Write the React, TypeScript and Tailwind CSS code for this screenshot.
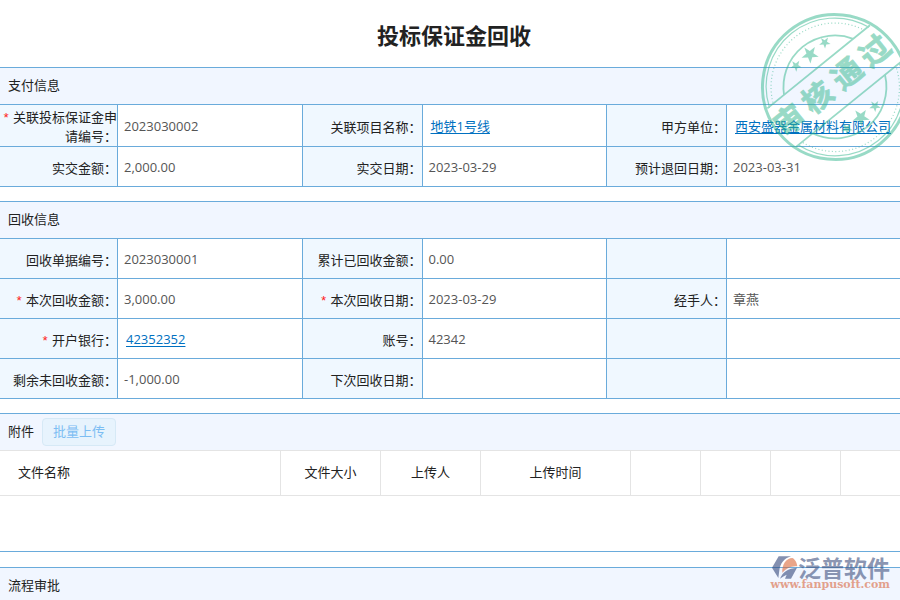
import type { ReactNode } from "react";

type Field = {
    label?: string;
    value?: string;
    required?: boolean;
    link?: boolean;
};

const paymentRows: Field[][] = [
    [
        { label: "关联投标保证金申请编号", value: "2023030002", required: true },
        { label: "关联项目名称", value: "地铁1号线", link: true },
        { label: "甲方单位", value: "西安盛器金属材料有限公司", link: true },
    ],
    [
        { label: "实交金额", value: "2,000.00" },
        { label: "实交日期", value: "2023-03-29" },
        { label: "预计退回日期", value: "2023-03-31" },
    ],
];

const recoveryRows: Field[][] = [
    [
        { label: "回收单据编号", value: "2023030001" },
        { label: "累计已回收金额", value: "0.00" },
        {},
    ],
    [
        { label: "本次回收金额", value: "3,000.00", required: true },
        { label: "本次回收日期", value: "2023-03-29", required: true },
        { label: "经手人", value: "章燕" },
    ],
    [
        { label: "开户银行", value: "42352352", required: true, link: true },
        { label: "账号", value: "42342" },
        {},
    ],
    [
        { label: "剩余未回收金额", value: "-1,000.00" },
        { label: "下次回收日期" },
        {},
    ],
];

function SectionTitle({ children }: { children: ReactNode }) {
    return (
        <div className="flex h-[38px] items-center gap-2 border-y border-[#6aabdb] bg-[#f1f6ff] px-2">
            {children}
        </div>
    );
}

function FieldCells({ field }: { field: Field }) {
    const { label, value, required, link } = field;

    return (
        <>
            <th
                scope="row"
                className="border-r border-b border-[#6aabdb] bg-[#f0f8ff] pt-[3px] text-right font-normal text-[#222]"
            >
                {required && (
                    <span className="mr-[3px] align-middle font-['Liberation_Mono',monospace] text-[13px] leading-none text-[#ff2020]">
                        *
                    </span>
                )}
                {label && `${label}：`}
            </th>
            <td className="border-r border-b border-[#6aabdb] pt-0.5 text-[#555] last:border-r-0">
                {link ? (
                    <a href="#" className="pl-2 whitespace-nowrap text-[#0070c0]">
                        <span className="underline underline-offset-2">{value}</span>
                    </a>
                ) : (
                    <span className="pl-1.5">{value}</span>
                )}
            </td>
        </>
    );
}

function FieldTable({ rows }: { rows: Field[][] }) {
    return (
        <table className="w-full table-fixed border-separate border-spacing-0 leading-[19px]">
            <colgroup>
                <col className="w-[118px]" />
                <col className="w-[20.5%]" />
                <col className="w-[120px]" />
                <col className="w-[20.5%]" />
                <col className="w-[120px]" />
                <col />
            </colgroup>
            <tbody>
                {rows.map((row, i) => (
                    <tr key={i} className="h-10">
                        {row.map((field, j) => (
                            <FieldCells key={j} field={field} />
                        ))}
                    </tr>
                ))}
            </tbody>
        </table>
    );
}

function FileTable() {
    const head = "border-r border-b border-[#e4e4e4] font-normal";

    return (
        <table className="w-full table-fixed border-separate border-spacing-0 text-[#222]">
            <colgroup>
                <col />
                <col className="w-[100px]" />
                <col className="w-[100px]" />
                <col className="w-[150px]" />
                <col className="w-[70px]" />
                <col className="w-[70px]" />
                <col className="w-[70px]" />
                <col className="w-[59px]" />
            </colgroup>
            <thead>
                <tr className="h-[45px]">
                    <th className={`${head} pl-[18px] text-left`}>文件名称</th>
                    <th className={head}>文件大小</th>
                    <th className={head}>上传人</th>
                    <th className={head}>上传时间</th>
                    <td className={head} />
                    <td className={head} />
                    <td className={head} />
                    <td className="border-b border-[#e4e4e4]" />
                </tr>
            </thead>
        </table>
    );
}

// 五角星，外接圆半径为 1
const STAR = "M0-1 .235-.324 .951-.309 .38.124 .588.809 0 .4-.588.809-.38.124-.951-.309-.235-.324Z";

const stars = [
    { x: -17, y: -41, r: 6 },
    { x: 1, y: -41, r: 9 },
    { x: 20, y: -41, r: 6 },
    { x: -17, y: 40, r: 6 },
    { x: 1, y: 40, r: 9 },
    { x: 19, y: 40, r: 6 },
];

const stampChars = [
    { char: "审", x: -56 },
    { char: "核", x: -20 },
    { char: "通", x: 18 },
    { char: "过", x: 54 },
];

// 审核通过印章
function Stamp() {
    return (
        <svg
            viewBox="-75 -75 150 150"
            className="pointer-events-none absolute top-3 -right-2.5 size-[150px] opacity-50"
            role="img"
            aria-label="审核通过"
        >
            <g transform="rotate(-39)" fill="none" stroke="#34b78e">
                <circle r="72.5" strokeWidth="3" />
                <path d="M-64-25A68.500 68.500 0 0 1 64-25M-65 22A68.500 68.500 0 0 0 65 22" strokeWidth="1.2" />
                <path d="M-58-27A64 64 0 0 1 58-27M-60 23A64 64 0 0 0 60 23" strokeWidth="1.2" strokeDasharray="1 2.4" />
                <path d="M-44.500-26A51.500 51.500 0 0 1 44.500-26M-46.500 22A51.500 51.500 0 0 0 46.500 22" strokeWidth="1.8" />
                <path d="M-66-26H66M-68 22H68" strokeWidth="1.8" />
                {stars.map((s, i) => (
                    <path key={i} d={STAR} transform={`translate(${s.x} ${s.y}) scale(${s.r})`} fill="#34b78e" stroke="none" />
                ))}
                {stampChars.map(({ char, x }) => (
                    <text
                        key={char}
                        x={x}
                        y="8"
                        textAnchor="middle"
                        fill="#34b78e"
                        strokeWidth="0.8"
                        className="font-['Noto_Sans_CJK_SC',sans-serif] text-[30px] font-bold"
                    >
                        {char}
                    </text>
                ))}
            </g>
        </svg>
    );
}

function Brand() {
    return (
        <div className="pointer-events-none absolute right-2.5 bottom-3.5 flex flex-col items-end opacity-60">
            <div className="flex items-center">
                <svg viewBox="0 0 78 69" className="h-[23px] w-[26px]" aria-hidden="true">
                    <path d="M0 35 20 1H57C36 7 25 22 22 43L19 66Z" fill="#34487c" />
                    <path d="M31 50C29 26 43 6 61 6 70 10 75 22 76 31 58 29 43 36 31 50Z" fill="#dc6a3c" />
                    <path d="M24 68C32 48 48 37 75 35L57 68H39L44 56C37 59 31 63 24 68Z" fill="#34487c" />
                </svg>
                <span className="font-['Noto_Sans_CJK_SC',sans-serif] text-[23px] leading-6 font-bold text-[#41527f]">
                    泛普软件
                </span>
            </div>
            <span className="font-['DejaVu_Serif',serif] text-[11px] leading-3 font-bold text-[#d9683f]">
                www.fanpusoft.com
            </span>
        </div>
    );
}

export default function App() {
    return (
        <div
            lang="zh-CN"
            className="relative overflow-hidden bg-white font-['Open_Sans','Noto_Sans_CJK_SC',sans-serif] text-[13px] text-[#222]"
        >
            <h1 className="flex h-[67px] items-center justify-center pt-1 pl-2 text-[22px] font-bold">
                投标保证金回收
            </h1>

            <section>
                <SectionTitle>
                    <h2>支付信息</h2>
                </SectionTitle>
                <FieldTable rows={paymentRows} />
            </section>

            <section className="mt-3.5">
                <SectionTitle>
                    <h2>回收信息</h2>
                </SectionTitle>
                <FieldTable rows={recoveryRows} />
            </section>

            <section className="mt-3.5 border-b border-[#6aabdb] pb-[55px]">
                <div className="flex h-[38px] items-center gap-2 border-t border-b border-t-[#6aabdb] border-b-[#e4e4e4] bg-[#f1f6ff] px-2">
                    <h2>附件</h2>
                    <button
                        type="button"
                        disabled
                        className="h-7 rounded border border-[#d6e9f6] bg-[#e7f3fd] px-2.5 text-[#7cbdf3]"
                    >
                        批量上传
                    </button>
                </div>
                <FileTable />
            </section>

            <section className="mt-[15px]">
                <SectionTitle>
                    <h2>流程审批</h2>
                </SectionTitle>
            </section>

            <Stamp />
            <Brand />
        </div>
    );
}
